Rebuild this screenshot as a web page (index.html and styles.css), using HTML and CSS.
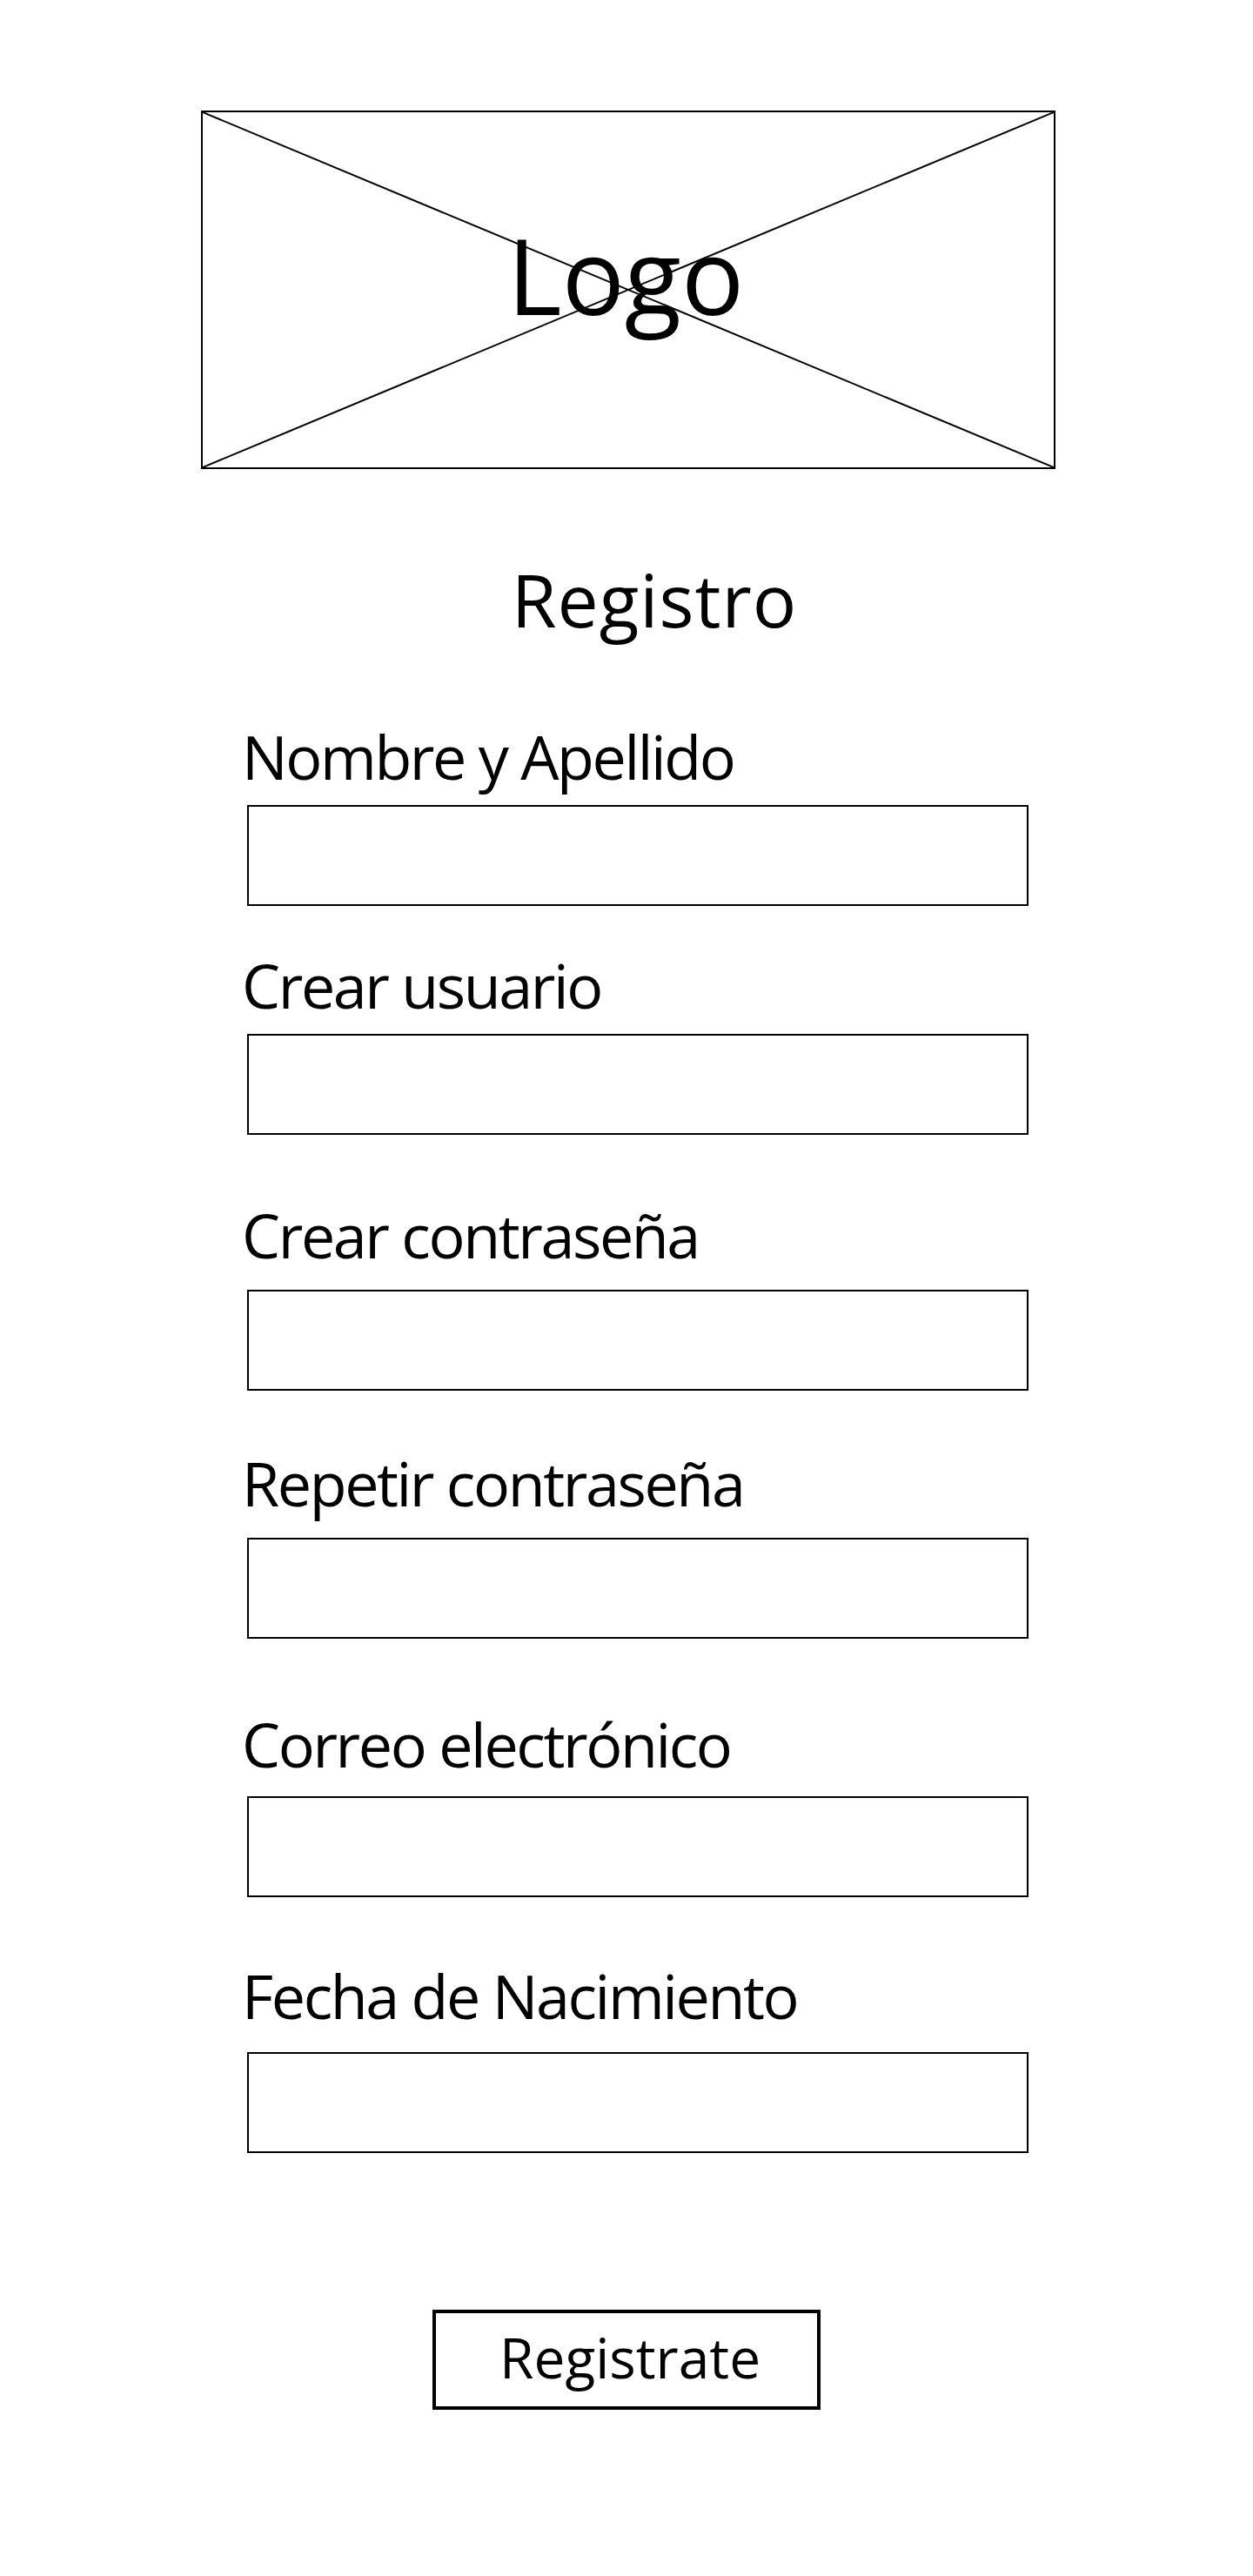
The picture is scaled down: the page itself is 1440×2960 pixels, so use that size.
FILE: index.html
```html
<!DOCTYPE html>
<html lang="es">
<head>
<meta charset="utf-8">
<title>Registro</title>
<link rel="stylesheet" href="styles.css">
</head>
<body>
<main class="page">
  <div class="logo-box">
    <svg class="logo-x" viewBox="0 0 100 100" preserveAspectRatio="none" aria-hidden="true">
      <line x1="0" y1="0" x2="100" y2="100" vector-effect="non-scaling-stroke"/>
      <line x1="100" y1="0" x2="0" y2="100" vector-effect="non-scaling-stroke"/>
    </svg>
    <span class="logo-text">Logo</span>
  </div>

  <h1 class="title">Registro</h1>

  <form class="form">
    <div class="field">
      <label class="field-label">Nombre y Apellido</label>
      <input class="field-input" type="text">
    </div>
    <div class="field">
      <label class="field-label">Crear usuario</label>
      <input class="field-input" type="text">
    </div>
    <div class="field">
      <label class="field-label">Crear contraseña</label>
      <input class="field-input" type="password">
    </div>
    <div class="field">
      <label class="field-label">Repetir contraseña</label>
      <input class="field-input" type="password">
    </div>
    <div class="field">
      <label class="field-label">Correo electrónico</label>
      <input class="field-input" type="email">
    </div>
    <div class="field">
      <label class="field-label">Fecha de Nacimiento</label>
      <input class="field-input" type="text">
    </div>
    <button class="submit" type="button">Registrate</button>
  </form>
</main>
</body>
</html>
```

FILE: styles.css
```css
* {
  box-sizing: border-box;
}

html, body {
  margin: 0;
  padding: 0;
  background: #ffffff;
}

body {
  font-family: "Open Sans", "Noto Sans", sans-serif;
  color: #000000;
}

.page {
  width: 1440px;
  min-height: 2960px;
  display: flex;
  flex-direction: column;
  padding-top: 127px;
}

/* Logo placeholder */
.logo-box {
  margin-left: 231px;
  width: 982px;
  height: 412px;
  border: 2px solid #000;
  display: grid;
  grid-template: 1fr / 1fr;
}

.logo-x {
  grid-area: 1 / 1;
  width: 100%;
  height: 100%;
  display: block;
}

.logo-x line {
  stroke: #000;
  stroke-width: 2;
}

.logo-text {
  grid-area: 1 / 1;
  justify-self: start;
  align-self: start;
  margin-left: 350px;
  margin-top: 127px;
  font-size: 120px;
  line-height: 120px;
  font-weight: 400;
}

/* Title */
.title {
  margin: 108px 0 0 0;
  padding-left: 64px;
  text-align: center;
  font-size: 84px;
  line-height: 84px;
  font-weight: 400;
  letter-spacing: 1px;
}

/* Form */
.form {
  margin: 103px 0 0 278px;
  width: 904px;
  display: flex;
  flex-direction: column;
}

.field {
  display: flex;
  flex-direction: column;
  align-items: flex-start;
}

.field-label {
  font-size: 70px;
  line-height: 70px;
  letter-spacing: -2.4px;
  font-weight: 400;
}

.field-input {
  margin-left: 6px;
  width: 898px;
  height: 116px;
  border: 2px solid #000;
  border-radius: 0;
  background: #fff;
  padding: 0 16px;
  font: inherit;
  font-size: 40px;
  outline: none;
}

.field:nth-child(1) .field-input { margin-top: 21px; }
.field:nth-child(2) { margin-top: 56px; }
.field:nth-child(2) .field-input { margin-top: 21px; }
.field:nth-child(3) { margin-top: 80px; }
.field:nth-child(3) .field-input { margin-top: 28px; }
.field:nth-child(4) { margin-top: 71px; }
.field:nth-child(4) .field-input { margin-top: 28px; }
.field:nth-child(5) { margin-top: 86px; }
.field:nth-child(5) .field-input { margin-top: 25px; }
.field:nth-child(6) { margin-top: 78px; }
.field:nth-child(6) .field-input { margin-top: 30px; }

/* Submit */
.submit {
  margin-top: 180px;
  margin-left: 219px;
  width: 446px;
  height: 115px;
  border: 4px solid #000;
  border-radius: 0;
  background: #fff;
  color: #000;
  display: flex;
  align-items: center;
  justify-content: center;
  padding: 0 0 6px 8px;
  font-family: "Open Sans", "Noto Sans", sans-serif;
  font-size: 64px;
  line-height: 64px;
  font-weight: 400;
  cursor: pointer;
}
```
